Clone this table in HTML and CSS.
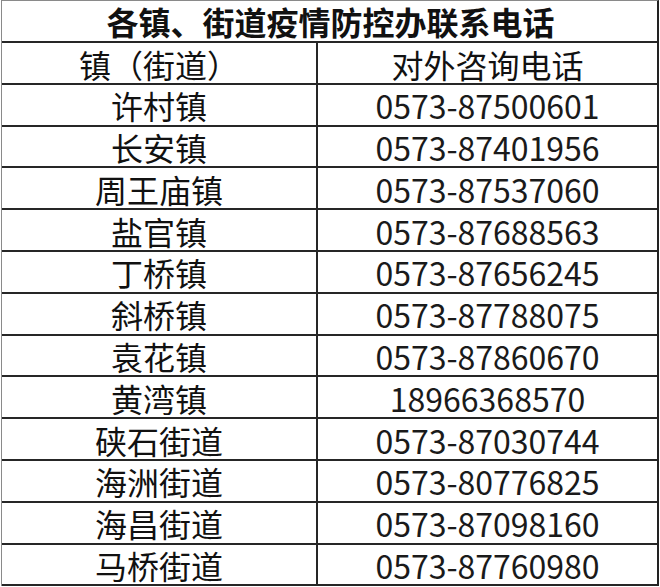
FILE: index.html
```html
<!DOCTYPE html>
<html lang="zh">
<head>
<meta charset="utf-8">
<link rel="stylesheet" href="styles.css">
</head>
<body>
<div class="sheet">
  <div class="cell title">各镇、街道疫情防控办联系电话</div>
  <div class="cell c1">镇（街道）</div><div class="cell c2">对外咨询电话</div>
  <div class="cell c1">许村镇</div><div class="cell c2 num">0573-87500601</div>
  <div class="cell c1">长安镇</div><div class="cell c2 num">0573-87401956</div>
  <div class="cell c1">周王庙镇</div><div class="cell c2 num">0573-87537060</div>
  <div class="cell c1">盐官镇</div><div class="cell c2 num">0573-87688563</div>
  <div class="cell c1">丁桥镇</div><div class="cell c2 num">0573-87656245</div>
  <div class="cell c1">斜桥镇</div><div class="cell c2 num">0573-87788075</div>
  <div class="cell c1">袁花镇</div><div class="cell c2 num">0573-87860670</div>
  <div class="cell c1">黄湾镇</div><div class="cell c2 num">18966368570</div>
  <div class="cell c1">硖石街道</div><div class="cell c2 num">0573-87030744</div>
  <div class="cell c1">海洲街道</div><div class="cell c2 num">0573-80776825</div>
  <div class="cell c1">海昌街道</div><div class="cell c2 num">0573-87098160</div>
  <div class="cell c1">马桥街道</div><div class="cell c2 num">0573-87760980</div>
</div>
</body>
</html>
```
FILE: styles.css
```css
html, body {
  margin: 0;
  padding: 0;
  background: #ffffff;
}
.sheet {
  display: grid;
  grid-template-columns: 316px 339px;
  grid-template-rows: 42px repeat(13, 41.8px);
  width: 658px;
  box-sizing: border-box;
  margin-left: 1px;
  border-top: 1px solid #8a8a8a;
  border-left: 1px solid #8a8a8a;
  border-right: 2px solid #222222;
  font-family: "Noto Sans CJK SC", "Noto Sans", sans-serif;
  color: #111111;
}
.cell {
  box-sizing: border-box;
  display: flex;
  align-items: center;
  justify-content: center;
  border-bottom: 2px solid #262626;
  font-size: 32px;
  line-height: 1.15;
  white-space: nowrap;
  padding-top: 2px;
}
.title {
  grid-column: 1 / span 2;
  font-weight: 700;
  padding-top: 0;
  padding-left: 2px;
}
.c1 {
  border-right: 2px solid #262626;
}
.num {
  color: #1a1a1a;
}
```
